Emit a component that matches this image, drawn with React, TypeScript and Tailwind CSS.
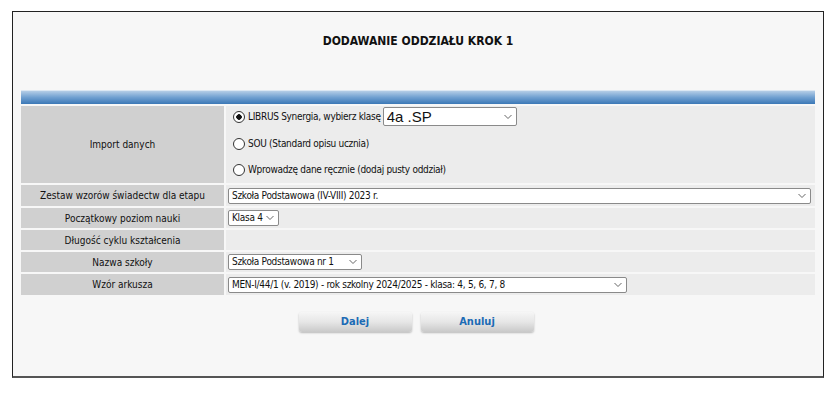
import React, { useState } from 'react';

const font = 'font-["DejaVu_Sans_Condensed","DejaVu_Sans",sans-serif]';

interface SelectProps {
  value: string;
  options: string[];
  className?: string;
  textClass?: string;
  onChange?: (v: string) => void;
}

// Old-style boxed select with a small chevron on the right
const Select: React.FC<SelectProps> = ({ value, options, className = '', textClass = '', onChange }) => (
  <div className={`relative inline-flex ${className}`}>
    <select
      value={value}
      onChange={(e) => onChange?.(e.target.value)}
      className={`appearance-none w-full h-full bg-white border border-[#8a8a8a] rounded-[2px] pl-[3px] pr-[14px] leading-none text-[#111] outline-none ${textClass}`}
    >
      {options.map((o) => (
        <option key={o} value={o}>
          {o}
        </option>
      ))}
    </select>
    <svg
      className="absolute right-[5px] top-1/2 -translate-y-1/2 pointer-events-none"
      width="8"
      height="5"
      viewBox="0 0 8 5"
    >
      <path d="M0.5 0.5 L4 4 L7.5 0.5" fill="none" stroke="#666" strokeWidth="1" />
    </svg>
  </div>
);

const Radio: React.FC<{ checked: boolean; onChange: () => void; label: string }> = ({
  checked,
  onChange,
  label,
}) => (
  <label className="flex items-center gap-[3px] cursor-pointer">
    <input
      type="radio"
      checked={checked}
      onChange={onChange}
      className="appearance-none w-[12px] h-[12px] rounded-full border border-[#333] bg-white checked:bg-[radial-gradient(circle,#111_0_2.5px,#fff_3px)] m-0 shrink-0"
    />
    <span>{label}</span>
  </label>
);

const LabelCell: React.FC<{ children: React.ReactNode; className?: string }> = ({ children, className = '' }) => (
  <div className={`bg-[#d0d0d0] flex items-center justify-center text-center tracking-normal ${className}`}>{children}</div>
);

const ValueCell: React.FC<{ children?: React.ReactNode; className?: string }> = ({ children, className = '' }) => (
  <div className={`bg-[#ececec] flex items-center pl-[2px] ${className}`}>{children}</div>
);

export default function App() {
  const [source, setSource] = useState<'librus' | 'sou' | 'manual'>('librus');
  const [klasa, setKlasa] = useState('4a .SP');
  const [zestaw, setZestaw] = useState('Szkoła Podstawowa (IV-VIII) 2023 r.');
  const [poziom, setPoziom] = useState('Klasa 4');
  const [szkola, setSzkola] = useState('Szkoła Podstawowa nr 1');
  const [arkusz, setArkusz] = useState('MEN-I/44/1 (v. 2019) - rok szkolny 2024/2025 - klasa: 4, 5, 6, 7, 8');

  return (
    <div className={`w-[840px] h-[395px] bg-white pt-[11px] pl-[12px] ${font} text-[10px] tracking-[-0.3px] text-[#111]`}>
      <div className="w-[812px] h-[367px] bg-[#f7f7f7] border border-[#222] border-b-[2px] border-b-[#555] flex flex-col px-[8px]">
        <h1 className="text-center font-bold text-[12px] tracking-normal text-[#111] mt-[20px] h-[17px]">
          DODAWANIE ODDZIAŁU KROK 1
        </h1>

        {/* Header bar */}
        <div className="mt-[41px] h-[14px] bg-gradient-to-b from-[#b4cde6] via-[#6f9fd0] to-[#3b78b6] border-t border-[#dbe7f3]" />

        {/* Form table */}
        <div className="mt-[1px] grid grid-cols-[203px_1fr] gap-[2px] pt-[1px]">
          <LabelCell className="h-[77px]">Import danych</LabelCell>
          <ValueCell className="h-[77px] flex-col items-start justify-center gap-[10px] pl-[7px] pb-[4px]">
            <div className="flex items-center gap-[2px] h-[18px]">
              <Radio checked={source === 'librus'} onChange={() => setSource('librus')} label="LIBRUS Synergia, wybierz klasę" />
              <Select
                value={klasa}
                options={['4a .SP', '4b .SP', '5a .SP']}
                onChange={setKlasa}
                className="w-[134px] h-[19px]"
                textClass='font-["Liberation_Sans",Arial,sans-serif] text-[15px] tracking-normal'
              />
            </div>
            <div className="h-[16px] flex items-center">
              <Radio checked={source === 'sou'} onChange={() => setSource('sou')} label="SOU (Standard opisu ucznia)" />
            </div>
            <div className="h-[16px] flex items-center">
              <Radio
                checked={source === 'manual'}
                onChange={() => setSource('manual')}
                label="Wprowadzę dane ręcznie (dodaj pusty oddział)"
              />
            </div>
          </ValueCell>

          <LabelCell className="h-[21px]">Zestaw wzorów świadectw dla etapu</LabelCell>
          <ValueCell className="h-[21px]">
            <Select
              value={zestaw}
              options={['Szkoła Podstawowa (IV-VIII) 2023 r.']}
              onChange={setZestaw}
              className="w-[583px] h-[16px]"
              textClass="text-[10px]"
            />
          </ValueCell>

          <LabelCell className="h-[20px]">Początkowy poziom nauki</LabelCell>
          <ValueCell className="h-[20px]">
            <Select
              value={poziom}
              options={['Klasa 4', 'Klasa 5', 'Klasa 6', 'Klasa 7', 'Klasa 8']}
              onChange={setPoziom}
              className="w-[51px] h-[16px]"
              textClass="text-[10px]"
            />
          </ValueCell>

          <LabelCell className="h-[20px]">Długość cyklu kształcenia</LabelCell>
          <ValueCell className="h-[20px]" />

          <LabelCell className="h-[20px]">Nazwa szkoły</LabelCell>
          <ValueCell className="h-[20px]">
            <Select
              value={szkola}
              options={['Szkoła Podstawowa nr 1']}
              onChange={setSzkola}
              className="w-[134px] h-[16px]"
              textClass="text-[10px]"
            />
          </ValueCell>

          <LabelCell className="h-[21px]">Wzór arkusza</LabelCell>
          <ValueCell className="h-[21px]">
            <Select
              value={arkusz}
              options={[arkusz]}
              onChange={setArkusz}
              className="w-[399px] h-[16px]"
              textClass="text-[10px]"
            />
          </ValueCell>
        </div>

        {/* Actions */}
        <div className="mt-[17px] flex justify-center gap-[9px] pr-[4px]">
          {['Dalej', 'Anuluj'].map((t) => (
            <button
              key={t}
              className="w-[113px] h-[20px] rounded-[3px] bg-gradient-to-b from-[#f6f6f6] via-[#e6e6e6] to-[#c9c9c9] shadow-[0_1px_2px_rgba(0,0,0,0.25)] text-[#1c6bb5] font-bold text-[11px] tracking-normal"
            >
              {t}
            </button>
          ))}
        </div>
      </div>
    </div>
  );
}
